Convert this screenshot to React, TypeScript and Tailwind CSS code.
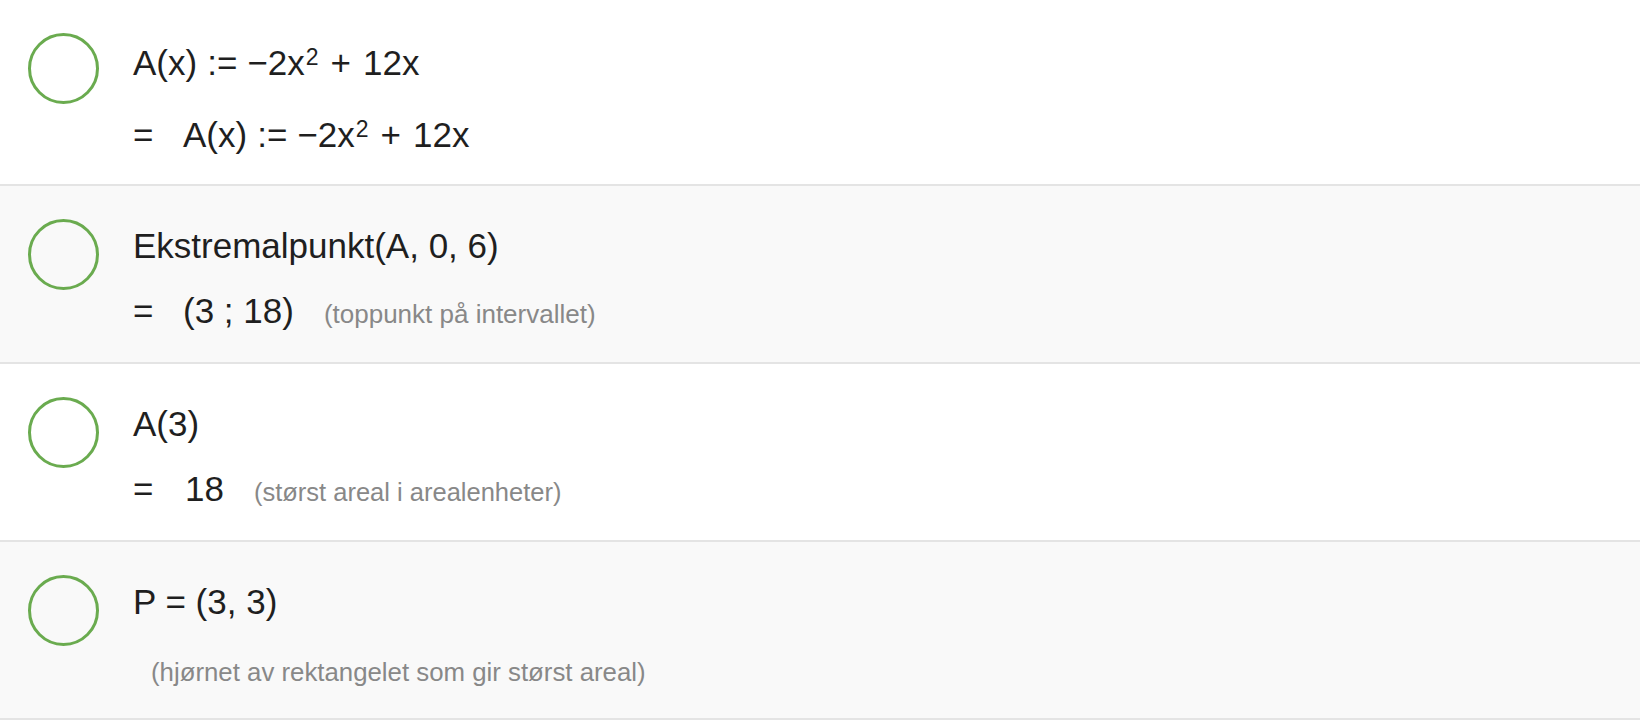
import React from "react";

const font = "font-['Liberation_Sans',Arial,sans-serif]";

function Marble() {
  return <div className="w-[71px] h-[71px] shrink-0 rounded-full border-[3px] border-[#6aab4f]" />;
}

function Formula() {
  return (
    <span className="inline-flex items-baseline whitespace-nowrap">
      <span>A(x)</span>
      <span className="ml-[10px]">:=</span>
      <span className="ml-[10px]">−2x</span>
      <span className="relative -top-[10px] text-[23px] ml-[1px]">2</span>
      <span className="ml-[12px]">+</span>
      <span className="ml-[12px]">12x</span>
    </span>
  );
}

function Row({
  bg,
  height,
  children,
}: {
  bg: string;
  height: string;
  children: React.ReactNode;
}) {
  return (
    <div className={`flex items-start pl-[28px] pt-[33px] border-b-2 border-[#e4e4e4] ${bg} ${height}`}>
      <Marble />
      <div className="ml-[34px] flex flex-col">{children}</div>
    </div>
  );
}

export default function App() {
  return (
    <div className={`w-[1640px] h-[720px] bg-white text-[#1f1f1f] ${font}`}>
      <Row bg="bg-white" height="h-[186px]">
        <div className="mt-[10px] text-[35px] leading-[40px]">
          <Formula />
        </div>
        <div className="mt-[28px] text-[35px] leading-[40px] flex items-baseline">
          <span className="inline-block w-[50px]">=</span>
          <Formula />
        </div>
      </Row>
      <Row bg="bg-[#f9f9f9]" height="h-[178px]">
        <div className="mt-[7px] text-[35px] leading-[40px] whitespace-nowrap">Ekstremalpunkt(A, 0, 6)</div>
        <div className="mt-[25px] text-[35px] leading-[40px] flex items-baseline whitespace-nowrap">
          <span className="inline-block w-[50px]">=</span>
          <span>(3 ; 18)</span>
          <span className="ml-[30px] text-[26px] text-[#888888]">(toppunkt på intervallet)</span>
        </div>
      </Row>
      <Row bg="bg-white" height="h-[178px]">
        <div className="mt-[7px] text-[35px] leading-[40px]">A(3)</div>
        <div className="mt-[25px] text-[35px] leading-[40px] flex items-baseline whitespace-nowrap">
          <span className="inline-block w-[52px]">=</span>
          <span>18</span>
          <span className="ml-[30px] text-[25.5px] text-[#888888]">(størst areal i arealenheter)</span>
        </div>
      </Row>
      <Row bg="bg-[#f9f9f9]" height="h-[178px]">
        <div className="mt-[7px] text-[35px] leading-[40px] whitespace-nowrap">P = (3, 3)</div>
        <div className="mt-[34px] ml-[18px] text-[25.8px] leading-[32px] text-[#888888] whitespace-nowrap">
          (hjørnet av rektangelet som gir størst areal)
        </div>
      </Row>
    </div>
  );
}
